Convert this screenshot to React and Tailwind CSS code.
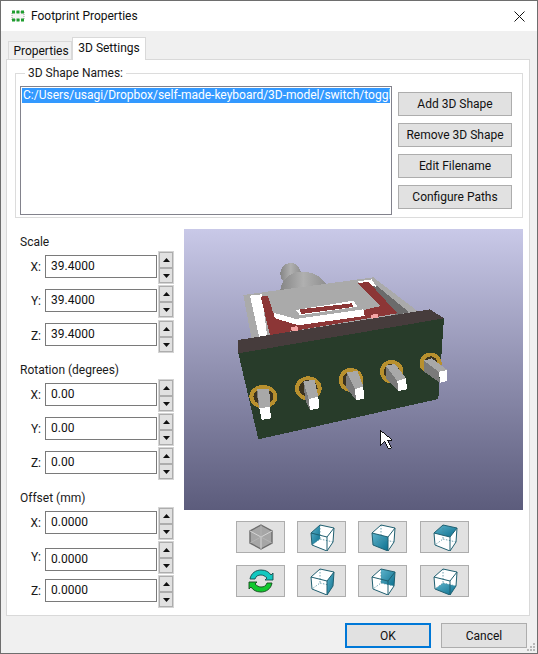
const Arrow = ({ up }) => (
  <svg width="7" height="4" viewBox="0 0 7 4" className="block">
    <polygon points={up ? "3.5,0 7,4 0,4" : "0,0 7,0 3.5,4"} fill="#111" />
  </svg>
);

function Spin({ input, top, val, label }) {
  return (
    <div className={`flex items-start ${top}`}>
      <span className="w-[25px] text-right pr-[4px] text-[#1a1a1a] leading-[16px] mt-[8px]">{label}</span>
      <div className={`w-[112px] h-[23px] border border-[#7a7a7a] bg-white pl-[5px] leading-[20px] ${input}`}>{val}</div>
      <div className="ml-[1px] w-[16px] h-[33px] bg-[#efefef] border border-[#d4d4d4] flex flex-col">
        <div className="h-[16px] bg-[#e1e1e1] border border-[#adadad] flex items-center justify-center"><Arrow up /></div>
        <div className="h-[15px] bg-[#e1e1e1] border border-[#adadad] flex items-center justify-center"><Arrow /></div>
      </div>
    </div>
  );
}

function Group({ title, titleCls, rows }) {
  return (
    <div className={titleCls}>
      <div className="h-[16px] leading-[16px] text-[#1a1a1a]">{title}</div>
      {rows}
    </div>
  );
}

const V = {
  FTL: [-11, -4], FTR: [5, 0], FBR: [5, 14], FBL: [-10, 8],
  BTL: [-2, -12], BTR: [12, -9], BBR: [11, 5], BBL: [-2, 2],
};
const pts = (...k) => k.map((n) => V[n].map((c, i) => c + (i ? 14 : 13)).join(",")).join(" ");
const faces = {
  left: ["FTL", "BTL", "BBL", "FBL"],
  front: ["FTL", "FTR", "FBR", "FBL"],
  top: ["FTL", "BTL", "BTR", "FTR"],
  right: ["FTR", "BTR", "BBR", "FBR"],
  back: ["BTL", "BTR", "BBR", "BBL"],
  bottom: ["FBL", "FBR", "BBR", "BBL"],
};

function Cube({ face }) {
  const id = "g" + face;
  return (
    <svg width="26" height="28" viewBox="0 0 26 28">
      <defs>
        <linearGradient id={id} x1="0" y1="0" x2="1" y2="1">
          <stop offset="0" stopColor="#5fb4cc" />
          <stop offset="1" stopColor="#0b6f8e" />
        </linearGradient>
      </defs>
      <polygon points={pts("FTL", "BTL", "BTR", "BBR", "FBR", "FBL")} fill="#fff" />
      <polygon points={pts(...faces[face])} fill={`url(#${id})`} />
      <polyline points={pts("BTL", "BBL", "FBL")} fill="none" stroke="#4a8a9c" strokeWidth="0.8" strokeDasharray="1.5 1.5" />
      <polyline points={pts("BBL", "BBR")} fill="none" stroke="#4a8a9c" strokeWidth="0.8" strokeDasharray="1.5 1.5" />
      <polygon points={pts("FTL", "BTL", "BTR", "BBR", "FBR", "FBL")} fill="none" stroke="#1f5f70" strokeWidth="1" />
      <polyline points={pts("FTL", "FTR", "BTR")} fill="none" stroke="#1f5f70" strokeWidth="1" />
      <line x1={V.FTR[0] + 13} y1={V.FTR[1] + 14} x2={V.FBR[0] + 13} y2={V.FBR[1] + 14} stroke="#1f5f70" strokeWidth="1" />
    </svg>
  );
}

const GrayCube = () => (
  <svg width="26" height="28" viewBox="0 0 26 28">
    <polygon points="13,2 24,8 24,20 13,26 2,20 2,8" fill="#a6a6a6" stroke="#6b6b6b" strokeWidth="1.4" />
    <polyline points="2,8 13,14 24,8" fill="none" stroke="#d4d4d4" strokeWidth="1" />
    <line x1="13" y1="14" x2="13" y2="26" stroke="#d4d4d4" strokeWidth="1" />
    <polyline points="13,2 13,14 2,20" fill="none" stroke="#bdbdbd" strokeWidth="0.6" />
    <line x1="13" y1="14" x2="24" y2="20" stroke="#bdbdbd" strokeWidth="0.6" />
  </svg>
);

const Refresh = () => (
  <svg width="26" height="26" viewBox="0 0 26 26">
    <path d="M2 11 C3 5 8 2 13 2 C18 2 21 4 23 7 L25 5 L25 12 L17 12 L19 10 C17 8 15 7 13 7 C10 7 8 8 7 11 Z" fill="#12c8c0" stroke="#1a4a4a" strokeWidth="0.9" strokeLinejoin="round" />
    <path d="M24 15 C23 21 18 24 13 24 C8 24 5 22 3 19 L1 21 L1 14 L9 14 L7 16 C9 18 11 19 13 19 C16 19 18 18 19 15 Z" fill="#10c82e" stroke="#144a1e" strokeWidth="0.9" strokeLinejoin="round" />
  </svg>
);

const IconBtn = ({ children }) => (
  <div className="w-[49px] h-[32px] bg-[#e1e1e1] border border-[#adadad] flex items-center justify-center">{children}</div>
);

const Btn = ({ children }) => (
  <div className="w-[114px] h-[24px] bg-[#e1e1e1] border border-[#adadad] flex items-center justify-center pb-[1px] text-[#111]">{children}</div>
);

const pins = [
  { c: [130, 440, 42, 35], t: "112,418 148,416 150,470 118,475", s: "112,418 118,475 116,470 112,440", w: "118,475 150,470 153,505 125,510" },
  { c: [265, 415, 40, 36], t: "250,395 283,388 295,440 266,447", s: "250,395 266,447 270,480 256,450", w: "266,447 295,440 298,475 270,480" },
  { c: [393, 390, 37, 36], t: "380,368 412,362 430,410 405,417", s: "380,368 405,417 408,450 378,412", w: "405,417 430,410 432,447 408,450" },
  { c: [515, 365, 35, 35], t: "497,347 525,342 558,385 532,393", s: "497,347 532,393 535,423 497,385", w: "532,393 558,385 561,418 535,423" },
  { c: [632, 340, 33, 32], t: "612,332 635,325 682,360 657,366", s: "612,332 657,366 660,398 612,365", w: "657,365 682,360 680,393 660,398" },
];

function Model() {
  return (
    <svg width="339" height="281" viewBox="184 229 339 281" className="block" shapeRendering="crispEdges">
      <defs>
        <linearGradient id="lev" x1="0" y1="0" x2="1" y2="0">
          <stop offset="0" stopColor="#858585" />
          <stop offset="0.5" stopColor="#b0b0b0" />
          <stop offset="1" stopColor="#8f8f8f" />
        </linearGradient>
      </defs>
      <g transform="translate(220 250) scale(0.33333)">
        <ellipse cx="212" cy="72" rx="31" ry="33" fill="url(#lev)" />
        <path d="M180 125 C185 80 220 62 255 65 C285 68 310 85 320 105 Z" fill="url(#lev)" />
        <polygon points="70,135 460,82 595,185 95,268" fill="#aaaaaa" />
        <polygon points="455,95 568,187 528,195 445,118" fill="#6b6b6b" />
        <polygon points="90,137 125,133 142,260 118,264" fill="#ffffff" />
        <polygon points="405,96 455,88 470,112 440,100" fill="#ffffff" />
        <polygon points="122,140 146,136 162,190 232,222 430,180 480,168 415,100 445,95 532,190 150,255" fill="#8c3636" />
        <polygon points="140,125 408,94 482,168 432,180 235,222 160,190" fill="#aaaaaa" />
        <polygon points="160,188 228,207 430,178 434,198 235,226 165,205" fill="#ffffff" />
        <polygon points="228,180 400,152 412,170 240,196" fill="#ffffff" />
        <polygon points="240,178 395,160 400,171 243,192" fill="#8c3636" />
        <polygon points="212,232 232,228 234,242 216,244" fill="#f4a3a3" />
        <polygon points="452,195 474,191 474,205 456,207" fill="#f4a3a3" />
        <polygon points="55,270 630,178 672,205 55,312" fill="#463c3c" />
        <polygon points="55,310 672,205 655,447 115,568" fill="#283c2a" />
        {pins.map((p, i) => (
          <g key={i}>
            <ellipse cx={p.c[0]} cy={p.c[1]} rx={p.c[2]} ry={p.c[3]} fill="#b8902e" />
            <ellipse cx={p.c[0]} cy={p.c[1]} rx={p.c[2] - 12} ry={p.c[3] - 11} fill="#3b3320" />
            <polygon points={p.s} fill="#7a7a7a" />
            <polygon points={p.t} fill="#a8a8a8" />
            <polygon points={p.w} fill="#ffffff" />
          </g>
        ))}
        <polygon points="481,541 481,586 494,575 506,598 514,593 503,571 517,570" fill="#ffffff" stroke="#111" strokeWidth="3" />
      </g>
    </svg>
  );
}

export default function App() {
  return (
    <div className="w-[538px] h-[654px] border border-[#6e6e6e] bg-[#f0f0f0] flex flex-col text-[12px] font-['Roboto',sans-serif] text-[#111] overflow-hidden">
      <div className="h-[30px] shrink-0 bg-white flex items-center pl-[10px] pr-[12px]">
        <svg width="14" height="14" viewBox="0 0 14 14" className="shrink-0">
          <rect x="1" y="3" width="12" height="8" fill="#f4f4f4" stroke="#777" strokeDasharray="1 1" strokeWidth="0.7" />
          <g fill="#1f9d2f">
            <rect x="1" y="1.5" width="3" height="3" /><rect x="5.5" y="1.5" width="3" height="3" /><rect x="10" y="1.5" width="3" height="3" />
            <rect x="1" y="9.5" width="3" height="3" /><rect x="5.5" y="9.5" width="3" height="3" /><rect x="10" y="9.5" width="3" height="3" />
          </g>
        </svg>
        <span className="ml-[6px] text-[#111]">Footprint Properties</span>
        <svg width="11" height="11" viewBox="0 0 11 11" className="ml-auto"><path d="M0.5 0.5 L10.5 10.5 M10.5 0.5 L0.5 10.5" stroke="#111" strokeWidth="1" /></svg>
      </div>
      <div className="h-[28px] shrink-0 flex items-end pl-[7px]">
        <div className="h-[18px] w-[64px] bg-[#f0f0f0] border border-b-0 border-[#d9d9d9] flex items-center justify-center pl-[2px]">Properties</div>
        <div className="h-[23px] w-[74px] bg-white border border-b-0 border-[#d9d9d9] flex items-center justify-center pb-[3px] -mb-[1px] relative z-10">3D Settings</div>
      </div>
      <div className="ml-[5px] w-[524px] h-[557px] shrink-0 bg-white border border-[#d9d9d9] pl-[8px]">
        <fieldset className="w-[508px] h-[153px] mt-[5px] border border-[#dcdcdc] pl-[4px] pr-[4px] flex">
          <legend className="ml-[5px] px-[3px] leading-[16px] text-[#1a1a1a]">3D Shape Names:</legend>
          <div className="flex mt-[5px]">
            <div className="w-[372px] h-[129px] border border-[#82828c] p-[1px] overflow-hidden">
              <div className="h-[15px] bg-[#3399ff] text-white leading-[15px] pl-[1px] whitespace-nowrap overflow-hidden">C:/Users/usagi/Dropbox/self-made-keyboard/3D-model/switch/toggle.wrl</div>
            </div>
            <div className="ml-[6px] mt-[6px] flex flex-col gap-[7px]">
              <Btn>Add 3D Shape</Btn>
              <Btn>Remove 3D Shape</Btn>
              <Btn>Edit Filename</Btn>
              <Btn>Configure Paths</Btn>
            </div>
          </div>
        </fieldset>
        <div className="flex mt-[11px]">
          <div className="w-[169px] pl-[5px]">
            <Group title="Scale" titleCls="mt-[5px]" rows={<>
              <Spin label="X:" val="39.4000" top="mt-[1px]" input="mt-[4px]" />
              <Spin label="Y:" val="39.4000" top="mt-[1px]" input="mt-[4px]" />
              <Spin label="Z:" val="39.4000" top="mt-[2px]" input="mt-[3px]" />
            </>} />
            <Group title="Rotation (degrees)" titleCls="mt-[9px]" rows={<>
              <Spin label="X:" val="0.00" top="mt-[1px]" input="mt-[4px]" />
              <Spin label="Y:" val="0.00" top="mt-[1px]" input="mt-[4px]" />
              <Spin label="Z:" val="0.00" top="mt-[1px]" input="mt-[4px]" />
            </>} />
            <Group title="Offset (mm)" titleCls="mt-[10px]" rows={<>
              <Spin label="X:" val="0.0000" top="mt-[1px]" input="mt-[4px]" />
              <Spin label="Y:" val="0.0000" top="mt-[1px]" input="mt-[7px]" />
              <Spin label="Z:" val="0.0000" top="mt-[1px]" input="mt-[4px]" />
            </>} />
          </div>
          <div className="w-[339px]">
            <div className="h-[281px] bg-gradient-to-b from-[#c9c9e8] to-[#5c5c7c]"><Model /></div>
            <div className="mt-[11px] ml-[52px] flex gap-x-[12px]">
              <IconBtn><GrayCube /></IconBtn><IconBtn><Cube face="left" /></IconBtn><IconBtn><Cube face="front" /></IconBtn><div className="ml-px"><IconBtn><Cube face="top" /></IconBtn></div>
            </div>
            <div className="mt-[12px] ml-[52px] flex gap-x-[12px]">
              <IconBtn><Refresh /></IconBtn><IconBtn><Cube face="right" /></IconBtn><IconBtn><Cube face="back" /></IconBtn><div className="ml-px"><IconBtn><Cube face="bottom" /></IconBtn></div>
            </div>
          </div>
        </div>
      </div>
      <div className="flex-1 flex pl-[344px] pt-[7px] relative">
        <div className="w-[86px] h-[25px] bg-[#e1e1e1] border-2 border-[#0078d7] flex items-center justify-center">OK</div>
        <div className="ml-[10px] w-[86px] h-[25px] bg-[#e1e1e1] border border-[#adadad] flex items-center justify-center">Cancel</div>
        <svg width="9" height="9" viewBox="0 0 9 9" className="absolute right-[1px] bottom-[1px]">
          <g fill="#b8b8b8"><rect x="6" y="0" width="2" height="2" /><rect x="3" y="3" width="2" height="2" /><rect x="6" y="3" width="2" height="2" /><rect x="0" y="6" width="2" height="2" /><rect x="3" y="6" width="2" height="2" /><rect x="6" y="6" width="2" height="2" /></g>
        </svg>
      </div>
    </div>
  );
}
